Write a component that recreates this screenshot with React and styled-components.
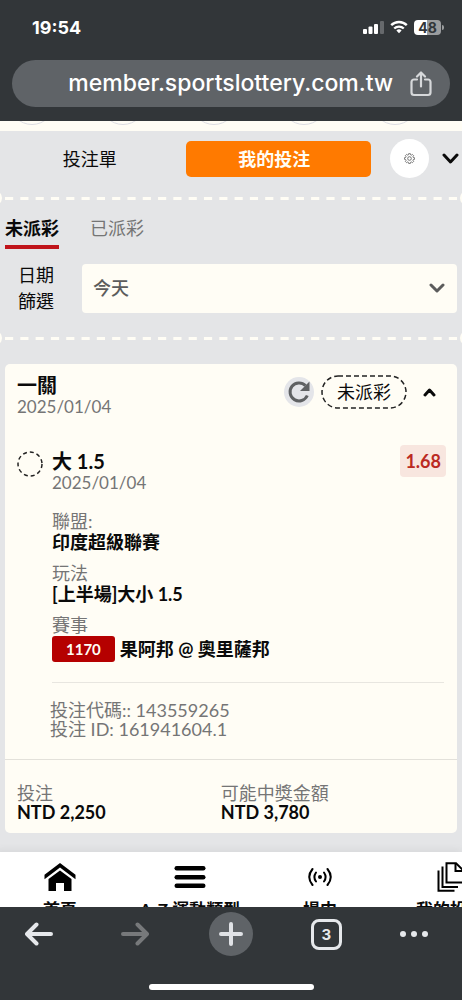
import React, { useState } from "react";
import styled, { createGlobalStyle, css } from "styled-components";

const App = () => {
  const [day, setDay] = useState("today");
  const [tab, setTab] = useState("pending");
  const [open, setOpen] = useState(true);

  return (
    <Page>
      <GlobalStyle />
      <BrowserTop>
        <StatusBar>
          <Clock>19:54</Clock>
          <StatusIcons>
            <SignalIcon />
            <WifiIcon />
            <Battery>
              <BatteryLevel>48</BatteryLevel>
              <BatteryTip />
            </Battery>
          </StatusIcons>
        </StatusBar>
        <AddressBar>
          <Address>member.sportslottery.com.tw</Address>
          <IconButton aria-label="分享">
            <ShareIcon />
          </IconButton>
        </AddressBar>
      </BrowserTop>

      <Site>
        <SportStrip>
          {[0, 1, 2, 3, 4].map((n) => (
            <SportDot key={n} />
          ))}
        </SportStrip>

        <SlipBar>
          <SlipTabs>
            <SlipTab>投注單</SlipTab>
            <SlipTab $active>我的投注</SlipTab>
          </SlipTabs>
          <RoundButton aria-label="設定">
            <GearIcon />
          </RoundButton>
          <IconButton aria-label="收合">
            <Chevron width={17} height={11} weight={3} />
          </IconButton>
        </SlipBar>

        <Perforation />

        <Tabs>
          <Tab $active={tab === "pending"} onClick={() => setTab("pending")}>
            未派彩
          </Tab>
          <Tab $active={tab === "settled"} onClick={() => setTab("settled")}>
            已派彩
          </Tab>
        </Tabs>

        <Filter>
          <FilterLabel htmlFor="day">日期篩選</FilterLabel>
          <SelectBox>
            <Select
              id="day"
              value={day}
              onChange={(e) => setDay(e.target.value)}
            >
              <option value="today">今天</option>
              <option value="yesterday">昨天</option>
            </Select>
            <Chevron width={16} height={10} weight={3} color="#5c5c5c" />
          </SelectBox>
        </Filter>

        <Perforation />

        <Card>
          <CardHead>
            <Heading>
              <Title>一關</Title>
              <Muted>2025/01/04</Muted>
            </Heading>
            <HeadActions>
              <Refresh aria-label="重新整理">
                <RefreshIcon />
              </Refresh>
              <Status>
                <svg>
                  <rect x="1" y="1" rx="16" />
                </svg>
                未派彩
              </Status>
              <IconButton aria-label="展開" onClick={() => setOpen(!open)}>
                <Chevron width={13} height={9} weight={3} up />
              </IconButton>
            </HeadActions>
          </CardHead>

          {open && (
            <Leg>
              <LegHead>
                <Ring viewBox="0 0 26 26">
                  <circle cx="13" cy="13" r="12" />
                </Ring>
                <Heading>
                  <Title>大 1.5</Title>
                  <Muted>2025/01/04</Muted>
                </Heading>
                <Odds>1.68</Odds>
              </LegHead>
              <LegBody>
                <Details>
                  <dt>聯盟:</dt>
                  <dd>印度超級聯賽</dd>
                  <dt>玩法</dt>
                  <dd>[上半場]大小 1.5</dd>
                  <dt>賽事</dt>
                  <Match>
                    <Code>1170</Code>
                    果阿邦 @ 奧里薩邦
                  </Match>
                </Details>
                <Rule />
              </LegBody>
              <Ids>
                <p>投注代碼:: 143559265</p>
                <p>投注 ID: 161941604.1</p>
              </Ids>
            </Leg>
          )}

          <Totals>
            <div>
              <dt>投注</dt>
              <dd>NTD 2,250</dd>
            </div>
            <div>
              <dt>可能中獎金額</dt>
              <dd>NTD 3,780</dd>
            </div>
          </Totals>
        </Card>
      </Site>

      <SiteNav>
        <NavItem href="#home">
          <HomeIcon />
          首頁
        </NavItem>
        <NavItem href="#sports">
          <MenuIcon />
          A-Z 運動類型
        </NavItem>
        <NavItem href="#live">
          <LiveIcon />
          場中
        </NavItem>
        <NavItem href="#bets">
          <PagesIcon />
          我的投注
        </NavItem>
      </SiteNav>

      <BrowserBottom>
        <Toolbar>
          <ToolButton aria-label="上一頁">
            <ArrowIcon />
          </ToolButton>
          <ToolButton aria-label="下一頁" disabled>
            <ArrowIcon forward />
          </ToolButton>
          <ToolButton aria-label="新分頁" $filled>
            <PlusIcon />
          </ToolButton>
          <ToolButton aria-label="分頁">
            <TabCount>3</TabCount>
          </ToolButton>
          <MoreButton aria-label="更多">
            <DotsIcon />
          </MoreButton>
        </Toolbar>
        <HomeIndicator />
      </BrowserBottom>
    </Page>
  );
};

export default App;

// Icons
const Chevron = ({ width, height, weight, up, color = "#0a0a0a" }) => (
  <svg width={width} height={height} fill="none" stroke={color}>
    <path
      d={
        up
          ? `M2 ${height - 2}L${width / 2} 2L${width - 2} ${height - 2}`
          : `M2 2L${width / 2} ${height - 2}L${width - 2} 2`
      }
      strokeWidth={weight}
      strokeLinecap="round"
      strokeLinejoin="round"
    />
  </svg>
);

const SignalIcon = () => (
  <svg width="21" height="13" fill="#fff">
    <rect x="0" y="8" width="4" height="5" rx="1" />
    <rect x="5.5" y="5.5" width="4" height="7.5" rx="1" />
    <rect x="11" y="3" width="4" height="10" rx="1" />
    <rect x="17" y="0" width="4" height="13" rx="1" fill="#66696c" />
  </svg>
);

const WifiIcon = () => (
  <svg width="18" height="14" viewBox="0 0 18 14" fill="none" stroke="#fff">
    <path d="M1.2 5.2a11.2 11.2 0 0 1 15.6 0" strokeWidth="2.4" />
    <path d="M4.2 8.5a7 7 0 0 1 9.6 0" strokeWidth="2.3" />
    <path d="M9 13.2l-2.6-2.7a3.8 3.8 0 0 1 5.2 0z" fill="#fff" stroke="none" />
  </svg>
);

const ShareIcon = () => (
  <svg
    width="22"
    height="26"
    viewBox="0 0 22 26"
    fill="none"
    stroke="#d6d8da"
    strokeWidth="2.2"
    strokeLinecap="round"
    strokeLinejoin="round"
  >
    <path d="M7 8.500H4A2.500 2.500 0 0 0 1.500 11v10.500A2.500 2.500 0 0 0 4 24h14a2.500 2.500 0 0 0 2.500-2.500V11A2.500 2.500 0 0 0 18 8.500h-3" />
    <path d="M11 15.500V1.800M7 5.500l4-4 4 4" />
  </svg>
);

const GearIcon = () => (
  <svg
    width="11"
    height="11"
    viewBox="0 0 24 24"
    fill="none"
    stroke="#6b6b6b"
    strokeWidth="2"
    strokeLinejoin="round"
  >
    <path d="M9.500 4L10 1.500h4L14.500 4l1.700.7L18.400 3.200l2.600 2.600-1.500 2.200.7 1.700 2.500.4v4l-2.500.4-.7 1.700 1.500 2.200-2.600 2.600-2.200-1.500-1.700.7-.5 2.500h-4l-.5-2.500-1.700-.7L5.600 21 3 18.400l1.500-2.200-.7-1.700L1.300 14v-4l2.500-.4.7-1.700L3 5.700l2.600-2.600 2.200 1.500z" />
    <circle cx="12" cy="12" r="4" />
  </svg>
);

const RefreshIcon = () => (
  <svg width="24" height="24" viewBox="0 0 24 24" fill="none">
    <path
      d="M20.300 15.500A9 9 0 1 1 18.500 5.600"
      stroke="#5f6163"
      strokeWidth="3"
    />
    <path d="M22.500 1.500v9.500h-9.500z" fill="#5f6163" />
  </svg>
);

const HomeIcon = () => (
  <svg width="32" height="28" viewBox="0 0 32 28" fill="#000">
    <path d="M16 0l15.500 11.800v4.400L16 4.600.5 16.200v-4.400z" />
    <path d="M16 7.400l11.500 8.600v12h-7.500v-8h-8v8H4.500V16z" />
  </svg>
);

const MenuIcon = () => (
  <svg width="32" height="28" viewBox="0 0 32 28" fill="#000">
    <rect x="0.5" y="3" width="31" height="4.500" rx="2.200" />
    <rect x="0.5" y="12" width="31" height="4.500" rx="2.200" />
    <rect x="0.5" y="20.500" width="31" height="4.500" rx="2.200" />
  </svg>
);

const LiveIcon = () => (
  <svg
    width="24"
    height="28"
    viewBox="0 0 24 28"
    fill="none"
    stroke="#000"
    strokeWidth="2"
    strokeLinecap="round"
  >
    <circle cx="12" cy="14" r="2" fill="#000" stroke="none" />
    <path d="M8 9.500q-3.200 4.500 0 9M16 9.500q3.200 4.500 0 9" />
    <path d="M4.500 6q-6.500 8 0 16M19.500 6q6.500 8 0 16" />
  </svg>
);

const PagesIcon = () => (
  <svg
    width="30"
    height="30"
    viewBox="-2 0 30 30"
    fill="none"
    stroke="#000"
    strokeWidth="2"
  >
    <path d="M9.500 1.200h9.500l7.500 7.500V20.500h-17z" />
    <path d="M18.500 1.500v7.500h8" />
    <path d="M5.500 4.500V25H21" />
    <path d="M1.500 8.500v20.200h16" />
  </svg>
);

const ArrowIcon = ({ forward }) => (
  <svg
    width="28"
    height="24"
    viewBox="0 0 28 24"
    fill="none"
    stroke={forward ? "#77797b" : "#e6e8eb"}
    strokeWidth="4"
    strokeLinecap="round"
    strokeLinejoin="round"
  >
    <path
      d={
        forward
          ? "M2 12h23M16.500 2.500l9.500 9.500-9.500 9.500"
          : "M26 12H3M11.500 2.500L2 12l9.500 9.500"
      }
    />
  </svg>
);

const PlusIcon = () => (
  <svg width="26" height="26" stroke="#e0e2e6" strokeWidth="4">
    <path d="M13 3v20M3 13h20" strokeLinecap="round" />
  </svg>
);

const DotsIcon = () => (
  <svg width="28" height="8" fill="#e6e8eb">
    <circle cx="3" cy="4" r="3" />
    <circle cx="14" cy="4" r="3" />
    <circle cx="25" cy="4" r="3" />
  </svg>
);

// Dashed tear line with a notch at each edge
const Perforation = () => (
  <Tear>
    <svg width="100%" height="3">
      <line x1="0" y1="1.500" x2="100%" y2="1.500" pathLength="443" />
    </svg>
  </Tear>
);

// Styled Components
const GlobalStyle = createGlobalStyle`
  * {
    box-sizing: border-box;
  }

  body {
    margin: 0;
    background: #323639;
    font-family: Lato, "Noto Sans CJK TC", sans-serif;
    font-size: 18px;
    color: #0a0a0a;
  }

  button,
  select {
    border: 0;
    padding: 0;
    background: none;
    color: inherit;
    font: inherit;
    cursor: pointer;
  }

  svg {
    display: block;
    flex: none;
  }

  p, dl, dd, h2 {
    margin: 0;
  }
`;

const Page = styled.div`
  display: flex;
  flex-direction: column;
  height: 100vh;
  overflow: hidden;
`;

const BrowserTop = styled.header`
  background: #323639;
  padding: 15px 12px 14px;
  font-family: Inter, sans-serif;
  color: #fff;
`;

const StatusBar = styled.div`
  display: flex;
  justify-content: space-between;
  align-items: center;
  height: 24px;
  margin-bottom: 21px;
  padding: 0 6px 0 20px;
`;

const Clock = styled.span`
  font-size: 18px;
  font-weight: 700;
`;

const StatusIcons = styled.div`
  display: flex;
  align-items: center;
  gap: 6px;
`;

const Battery = styled.div`
  display: flex;
  align-items: center;
  gap: 1px;
`;

const BatteryLevel = styled.span`
  width: 27px;
  border-radius: 4px;
  background: linear-gradient(90deg, #fff 48%, #9a9c9e 48%);
  color: #323639;
  font-size: 14px;
  font-weight: 700;
  line-height: 15px;
  text-align: center;
`;

const BatteryTip = styled.span`
  width: 2px;
  height: 5px;
  border-radius: 0 2px 2px 0;
  background: #9a9c9e;
`;

const AddressBar = styled.div`
  display: flex;
  align-items: center;
  justify-content: flex-end;
  gap: 17px;
  height: 47px;
  padding: 0 18px;
  border-radius: 24px;
  background: #5f6367;
`;

const Address = styled.span`
  padding-bottom: 2px;
  font-size: 23px;
  font-weight: 500;
  line-height: 28px;
`;

const IconButton = styled.button`
  display: flex;
  align-items: center;
  justify-content: center;
`;

const Site = styled.main`
  flex: 1;
  min-height: 0;
  overflow: hidden;
  background: #e4e5e7;
`;

const SportStrip = styled.div`
  display: flex;
  align-items: flex-end;
  justify-content: space-between;
  height: 10px;
  padding: 0 44px 6px 9px;
  overflow: hidden;
  background: #fffdf5;
`;

const SportDot = styled.span`
  width: 46px;
  height: 46px;
  border: 1px solid #dcdce2;
  border-radius: 50%;
`;

const SlipBar = styled.div`
  display: flex;
  align-items: center;
  padding: 8px 3px 13px 0;

  ${IconButton} {
    margin-left: 13px;
  }
`;

const SlipTabs = styled.div`
  flex: 1;
  display: grid;
  grid-template-columns: 1fr 1fr;
`;

const SlipTab = styled.button`
  height: 36px;
  padding-right: 6px;
  border-radius: 5px;
  line-height: 36px;

  ${({ $active }) =>
    $active &&
    css`
      padding-right: 8px;
      background: #ff7a00;
      color: #fffdf5;
      font-weight: 700;
    `}
`;

const RoundButton = styled.button`
  display: flex;
  align-items: center;
  justify-content: center;
  width: 39px;
  height: 39px;
  margin-left: 19px;
  border-radius: 50%;
  background: #fff;
`;

const Tear = styled.div`
  position: relative;
  display: flex;
  align-items: center;
  height: 14px;
  padding: 0 5px;
  overflow: hidden;

  line {
    stroke: #fffdf5;
    stroke-width: 3;
    stroke-dasharray: 8 7;
  }

  &::before,
  &::after {
    content: "";
    position: absolute;
    top: -1px;
    width: 16px;
    height: 16px;
    border-radius: 50%;
    background: #fffdf5;
  }

  &::before {
    left: -14px;
  }

  &::after {
    right: -14px;
  }
`;

const Tabs = styled.div`
  display: flex;
  gap: 31px;
  padding: 10px 5px 0;
`;

const Tab = styled.button`
  border-bottom: 4px solid ${({ $active }) => ($active ? "#c0141b" : "transparent")};
  padding-bottom: 4px;
  color: ${({ $active }) => ($active ? "#0a0a0a" : "#757575")};
  font-weight: ${({ $active }) => ($active ? 700 : 400)};
  line-height: 26px;
`;

const Filter = styled.div`
  display: flex;
  align-items: center;
  gap: 28px;
  padding: 13px 5px 17px 18px;
`;

const FilterLabel = styled.label`
  width: 36px;
  line-height: 26px;
`;

const SelectBox = styled.div`
  flex: 1;
  display: grid;
  align-items: center;

  > * {
    grid-area: 1 / 1;
  }

  svg {
    justify-self: end;
    margin-right: 12px;
    pointer-events: none;
  }
`;

const Select = styled.select`
  appearance: none;
  height: 49px;
  padding: 0 11px;
  border-radius: 4px;
  background: #fffdf5;
  color: #5c5c5c;
  font-weight: 500;
`;

const Card = styled.section`
  margin: 19px 5px;
  border-radius: 5px;
  background: #fffdf5;
`;

const CardHead = styled.div`
  display: flex;
  align-items: flex-start;
  padding: 10px 21px 13px 12px;
`;

const HeadActions = styled.div`
  display: flex;
  align-items: center;
  padding-top: 1px;
`;

const Heading = styled.div`
  flex: 1;
`;

const Title = styled.h2`
  font-size: 20px;
  font-weight: 700;
  line-height: 22px;
`;

const Muted = styled.p`
  color: #757575;
  font-size: 17px;
  line-height: 21px;
`;

const Refresh = styled.button`
  display: flex;
  align-items: center;
  justify-content: center;
  width: 30px;
  height: 30px;
  border-radius: 50%;
  background: #e4e5e9;
`;

const Status = styled.span`
  position: relative;
  margin: 0 16px 0 7px;
  padding: 0 16px;
  line-height: 34px;

  svg {
    position: absolute;
    inset: 0;
    width: 100%;
    height: 100%;
  }

  rect {
    width: calc(100% - 2px);
    height: calc(100% - 2px);
    fill: none;
    stroke: #222;
    stroke-width: 1.5;
    stroke-dasharray: 5 3;
  }
`;

const Leg = styled.div`
  padding: 20px 12px;
  border-bottom: 1px solid #e3e1da;
`;

const LegHead = styled.div`
  display: flex;
  align-items: flex-start;
`;

const Ring = styled.svg`
  width: 26px;
  height: 26px;
  margin: 1px 9px 0 0;
  fill: none;
  stroke: #222;
  stroke-width: 1.5;
  stroke-dasharray: 4 3;
`;

const Odds = styled.strong`
  margin: -5px -1px 0 0;
  padding: 0 5px;
  border-radius: 4px;
  background: #f8e6df;
  color: #bb2a22;
  line-height: 32px;
`;

const LegBody = styled.div`
  padding: 18px 1px 0 35px;
`;

const Details = styled.dl`
  line-height: 21px;

  dt {
    color: #757575;
  }

  dd {
    margin-bottom: 10px;
    font-weight: 700;
  }
`;

const Match = styled.dd`
  display: flex;
  align-items: center;
  gap: 5px;
`;

const Code = styled.span`
  padding: 0 14px;
  border-radius: 3px;
  background: #b50000;
  color: #fffdf5;
  font-size: 15px;
  line-height: 26px;
`;

const Rule = styled.hr`
  margin: 20px 0 18px;
  border: 0;
  border-top: 1px solid #e8e6e0;
`;

const Ids = styled.div`
  padding-left: 33px;
  color: #757575;
  line-height: 19px;
`;

const Totals = styled.dl`
  display: grid;
  grid-template-columns: 10fr 11fr;
  padding: 24px 12px 11px;
  line-height: 19px;

  dt {
    color: #757575;
  }

  dd {
    font-weight: 700;
  }
`;

const SiteNav = styled.nav`
  display: flex;
  height: 55px;
  margin-left: -5px;
  overflow: hidden;
  background: #fff;
  box-shadow: 0 -2px 8px rgba(0, 0, 0, 0.06);
`;

const NavItem = styled.a`
  flex: 0 0 130px;
  display: flex;
  flex-direction: column;
  align-items: center;
  padding-top: 10px;
  color: #0a0a0a;
  font-size: 17px;
  font-weight: 700;
  line-height: 26px;
  text-decoration: none;
  white-space: nowrap;

  svg {
    height: 30px;
    margin-bottom: 5px;
  }
`;

const BrowserBottom = styled.footer`
  background: #323639;
  padding: 5px 0 10px;
  font-family: Inter, sans-serif;
`;

const Toolbar = styled.div`
  display: flex;
  align-items: center;
  justify-content: space-between;
  padding: 0 34px 0 17px;
`;

const ToolButton = styled.button`
  display: flex;
  align-items: center;
  justify-content: center;
  width: 44px;
  height: 44px;
  border-radius: 50%;
  background: ${({ $filled }) => ($filled ? "#5f6367" : "none")};
`;

const MoreButton = styled(IconButton)`
  width: 28px;
  height: 44px;
`;

const TabCount = styled.span`
  width: 31px;
  height: 31px;
  border: 3px solid #e6e8eb;
  border-radius: 8px;
  color: #e6e8eb;
  font-size: 15px;
  font-weight: 700;
  line-height: 25px;
`;

const HomeIndicator = styled.div`
  width: 165px;
  height: 6px;
  margin: 28px auto 0;
  border-radius: 3px;
  background: #fff;
`;
